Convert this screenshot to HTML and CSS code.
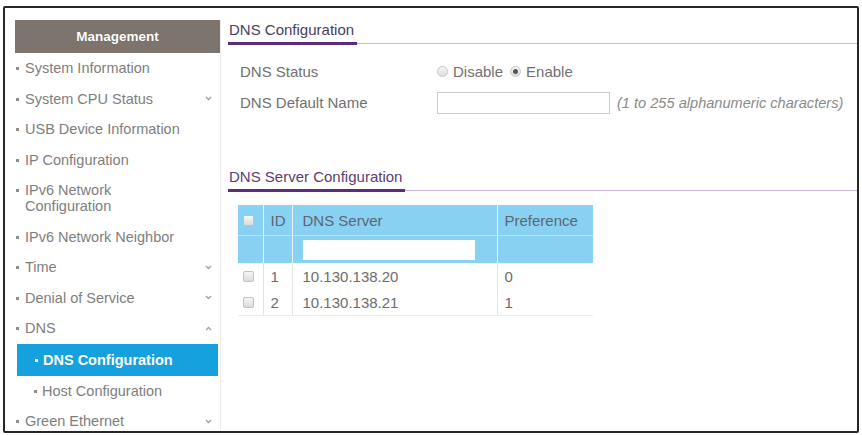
FILE: index.html
```html
<!DOCTYPE html>
<html lang="en">
<head>
    <meta charset="UTF-8">
    <title>DNS Configuration</title>
    <link rel="stylesheet" href="styles.css">
</head>
<body>
    <div class="frame">
        <aside class="sidebar">
            <div class="side-head">Management</div>
            <ul class="nav">
                <li class="nav-item"><span class="bullet"></span><span class="text">System Information</span></li>
                <li class="nav-item"><span class="bullet"></span><span class="text">System CPU Status</span>
                    <svg class="chev" width="7" height="5" viewBox="0 0 7 5"><path d="M1 1l2.5 2.5L6 1"/></svg></li>
                <li class="nav-item"><span class="bullet"></span><span class="text">USB Device Information</span></li>
                <li class="nav-item"><span class="bullet"></span><span class="text">IP Configuration</span></li>
                <li class="nav-item"><span class="bullet"></span><span class="text">IPv6 Network<br>Configuration</span></li>
                <li class="nav-item"><span class="bullet"></span><span class="text">IPv6 Network Neighbor</span></li>
                <li class="nav-item"><span class="bullet"></span><span class="text">Time</span>
                    <svg class="chev" width="7" height="5" viewBox="0 0 7 5"><path d="M1 1l2.5 2.5L6 1"/></svg></li>
                <li class="nav-item"><span class="bullet"></span><span class="text">Denial of Service</span>
                    <svg class="chev" width="7" height="5" viewBox="0 0 7 5"><path d="M1 1l2.5 2.5L6 1"/></svg></li>
                <li class="nav-item"><span class="bullet"></span><span class="text">DNS</span>
                    <svg class="chev" width="7" height="5" viewBox="0 0 7 5"><path d="M1 4l2.5-2.5L6 4"/></svg></li>
                <li class="nav-item sub active"><span class="bullet"></span><span class="text">DNS Configuration</span></li>
                <li class="nav-item sub"><span class="bullet"></span><span class="text">Host Configuration</span></li>
                <li class="nav-item"><span class="bullet"></span><span class="text">Green Ethernet</span>
                    <svg class="chev" width="7" height="5" viewBox="0 0 7 5"><path d="M1 1l2.5 2.5L6 1"/></svg></li>
            </ul>
        </aside>

        <main class="content">
            <section class="block">
                <div class="block-title"><span>DNS Configuration</span></div>
                <div class="form">
                    <div class="form-row">
                        <label class="field-label">DNS Status</label>
                        <div class="radios">
                            <span class="radio"></span><span>Disable</span>
                            <span class="radio on"></span><span>Enable</span>
                        </div>
                    </div>
                    <div class="form-row">
                        <label class="field-label" for="dnsName">DNS Default Name</label>
                        <input class="text-input" id="dnsName" type="text">
                        <span class="hint">(1 to 255 alphanumeric characters)</span>
                    </div>
                </div>
            </section>

            <section class="block block-server">
                <div class="block-title"><span>DNS Server Configuration</span></div>
                <table class="server-table">
                    <colgroup>
                        <col class="col-check">
                        <col class="col-id">
                        <col class="col-server">
                        <col class="col-pref">
                    </colgroup>
                    <thead>
                        <tr>
                            <th><span class="check"></span></th>
                            <th>ID</th>
                            <th class="server">DNS Server</th>
                            <th>Preference</th>
                        </tr>
                        <tr class="filter-row">
                            <th></th>
                            <th></th>
                            <th class="server"><input class="filter-input" type="text"></th>
                            <th></th>
                        </tr>
                    </thead>
                    <tbody>
                        <tr>
                            <td><span class="check"></span></td>
                            <td>1</td>
                            <td class="server">10.130.138.20</td>
                            <td>0</td>
                        </tr>
                        <tr>
                            <td><span class="check"></span></td>
                            <td>2</td>
                            <td class="server">10.130.138.21</td>
                            <td>1</td>
                        </tr>
                    </tbody>
                </table>
            </section>
        </main>
    </div>
</body>
</html>
```

FILE: styles.css
```css
body {
    margin: 0;
    padding: 6px 3px 0;
    font-family: "Liberation Sans", Arial, sans-serif;
    background-color: #fff;
}
.frame {
    width: 856px;
    height: 427px;
    box-sizing: border-box;
    border: 2px solid #262626;
    border-radius: 2px;
    padding: 12px 0 0 10px;
    display: flex;
    overflow: hidden;
}

/* left menu */
.sidebar {
    width: 205px;
    flex: none;
    border-right: 1px solid #ededed;
}
.side-head {
    height: 33px;
    line-height: 33px;
    background-color: #7d756d;
    color: #fff;
    font-size: 13.5px;
    font-weight: bold;
    text-align: center;
    text-shadow: 0 0 1px rgba(0, 0, 0, 0.3);
}
.nav {
    list-style: none;
    margin: 0;
    padding: 0;
}
.nav-item {
    display: flex;
    align-items: center;
    padding: 7.25px 8px 7.25px 1px;
    font-size: 14.5px;
    line-height: 16px;
    color: #7e7e7e;
}
.nav-item .bullet {
    flex: none;
    align-self: flex-start;
    width: 3px;
    height: 3px;
    margin: 7px 6px 0 0;
    background-color: #8c8c8c;
}
.nav-item .text {
    flex: 1;
}
.chev {
    flex: none;
    fill: none;
    stroke: #a0a0a0;
    stroke-width: 1.3;
}
.nav-item.sub {
    padding-left: 19px;
}
.nav-item.sub .bullet {
    margin-right: 5px;
}
.nav-item.active {
    margin: 0 2px;
    padding: 8px 8px 8px 18px;
    background-color: #15a1dd;
    color: #fff;
    font-weight: bold;
}
.nav-item.active .bullet {
    background-color: #fff;
    margin-top: 7px;
}

/* right content */
.content {
    flex: 1;
    padding: 2px 0 0 7px;
}
.block-title {
    display: flex;
    border-bottom: 1px solid #c8b7d5;
    font-size: 15px;
    color: #4b3d5d;
}
.block-title span {
    line-height: 16px;
    padding: 0 3px 4px 1px;
    border-bottom: 3px solid #5d2d7d;
    margin-bottom: -2px;
}
.form {
    padding: 12px 0 0 12px;
}
.form-row {
    display: flex;
    align-items: center;
    height: 31px;
    font-size: 15px;
    color: #707070;
}
.field-label {
    width: 197px;
    flex: none;
}
.radios {
    display: flex;
    align-items: center;
}
.radio {
    position: relative;
    width: 11px;
    height: 11px;
    box-sizing: border-box;
    border: 1px solid #c6c6c6;
    border-radius: 50%;
    background: linear-gradient(#f5f5f5, #dedede);
    margin-right: 5px;
}
.radio + span {
    margin-right: 7px;
}
.radio.on::after {
    content: "";
    position: absolute;
    left: 2px;
    top: 2px;
    width: 5px;
    height: 5px;
    border-radius: 50%;
    background-color: #555;
}
.text-input {
    width: 173px;
    height: 22px;
    box-sizing: border-box;
    border: 1px solid #ccc;
    margin: 0;
    padding: 0 4px;
}
.hint {
    margin-left: 7px;
    font-size: 14.6px;
    font-style: italic;
    color: #8a8a8a;
}

.block-server {
    margin-top: 51px;
}
.block-server .block-title {
    color: #5a3e70;
}
.server-table {
    margin: 14px 0 0 10px;
    width: 355px;
    table-layout: fixed;
    border-collapse: collapse;
    font-size: 15px;
    color: #6c6c6c;
}
.col-check { width: 25px; }
.col-id { width: 29px; }
.col-server { width: 205px; }
.col-pref { width: 96px; }
.server-table th,
.server-table td {
    padding: 0 0 0 7px;
    text-align: left;
    font-weight: normal;
    white-space: nowrap;
}
.server-table th {
    height: 30px;
    background-color: #88d1f2;
    color: #5c666e;
}
.server-table th + th {
    border-left: 1px solid #e6f6fd;
}
.server-table .filter-row th {
    height: 27px;
    border-top: 1px solid #b9e6f9;
}
.server-table td {
    height: 26px;
}
.server-table td + td {
    border-left: 1px solid #e4e4e4;
}
.server-table tbody tr:last-child td {
    border-bottom: 1px solid #ececec;
}
.server-table th:first-child,
.server-table td:first-child {
    padding-left: 5px;
}
.server-table .server {
    padding-left: 10px;
}
.filter-input {
    display: block;
    width: 172px;
    height: 20px;
    box-sizing: border-box;
    border: none;
    margin: 0;
    background-color: #fff;
}
.check {
    display: block;
    width: 11px;
    height: 11px;
    box-sizing: border-box;
    border: 1px solid #c2c2c2;
    border-radius: 2px;
    background: linear-gradient(#f6f6f6, #dcdcdc);
}
```
